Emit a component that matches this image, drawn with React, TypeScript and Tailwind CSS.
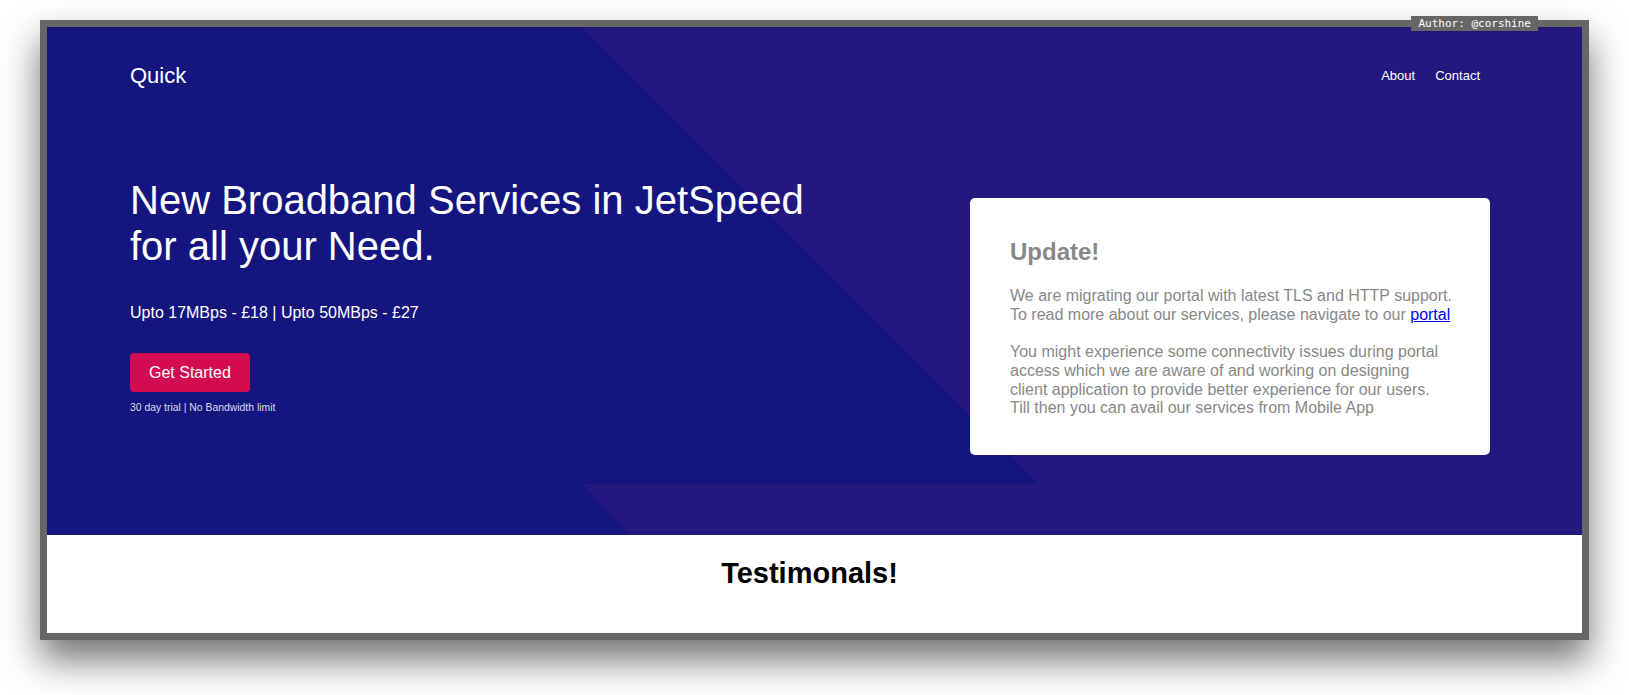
const heroShape = '0,0 535,0 992,457 535,457 582,508 0,508';

const App: React.FC = () => {
  return (
    <div className="min-h-screen w-full bg-white pt-[20px] pl-[40px] font-['Liberation_Sans',Arial,sans-serif]">
      <div className="relative w-[1549px] border-[7px] border-[#666666] shadow-[0_20px_35px_rgba(0,0,0,0.55)]">
        <span className="absolute top-[-11px] right-[44px] z-20 bg-[#666666] px-[7px] font-['DejaVu_Sans_Mono',monospace] text-[11px] leading-[15px] text-white">
          Author: @corshine
        </span>

        {/* hero */}
        <section className="relative h-[508px] overflow-hidden bg-[#24177e] text-white">
          <svg className="absolute inset-0" width="1535" height="508" viewBox="0 0 1535 508">
            <polygon points={heroShape} fill="#14157e" />
          </svg>

          <div className="relative flex flex-col pl-[83px] pr-[92px]">
            <header className="flex h-[28px] mt-[35px] items-center justify-between">
              <a href="#" className="text-[22px] leading-[28px]">Quick</a>
              <nav className="mr-[10px] flex gap-[20px] text-[13px]">
                <a href="#">About</a>
                <a href="#">Contact</a>
              </nav>
            </header>

            <div className="mt-[87px] flex justify-between">
              <div className="flex flex-col items-start">
                <h1 className="text-[40px] leading-[46px]">
                  New Broadband Services in JetSpeed
                  <br />
                  for all your Need.
                </h1>
                <p className="mt-[35px] text-[16px] leading-[18px]">
                  Upto 17MBps - £18 | Upto 50MBps - £27
                </p>
                <button className="mt-[31px] h-[39px] rounded-[4px] bg-[#d30b50] px-[19px] text-[16px]">
                  Get Started
                </button>
                <p className="mt-[10px] text-[10.4px] leading-[12px] text-[#dcdcf0]">
                  30 day trial | No Bandwidth limit
                </p>
              </div>

              <div className="mt-[21px] w-[520px] rounded-[5px] bg-white px-[40px] pt-[40px] pb-[37px] text-[#888888]">
                <h2 className="text-[24px] font-bold leading-[28px]">Update!</h2>
                <p className="mt-[21px] whitespace-nowrap text-[16px] leading-[18.7px]">
                  We are migrating our portal with latest TLS and HTTP support.
                  <br />
                  To read more about our services, please navigate to our{' '}
                  <a href="#" className="text-[#0000ee] underline">portal</a>
                  <br />
                  <br />
                  You might experience some connectivity issues during portal
                  <br />
                  access which we are aware of and working on designing
                  <br />
                  client application to provide better experience for our users.
                  <br />
                  Till then you can avail our services from Mobile App
                </p>
              </div>
            </div>
          </div>
        </section>

        {/* testimonials */}
        <section className="h-[98px] bg-white pt-[22px] pr-[10px] text-center">
          <h2 className="text-[29px] font-bold leading-[33px] text-black">Testimonals!</h2>
        </section>
      </div>
    </div>
  );
};

export default App;
